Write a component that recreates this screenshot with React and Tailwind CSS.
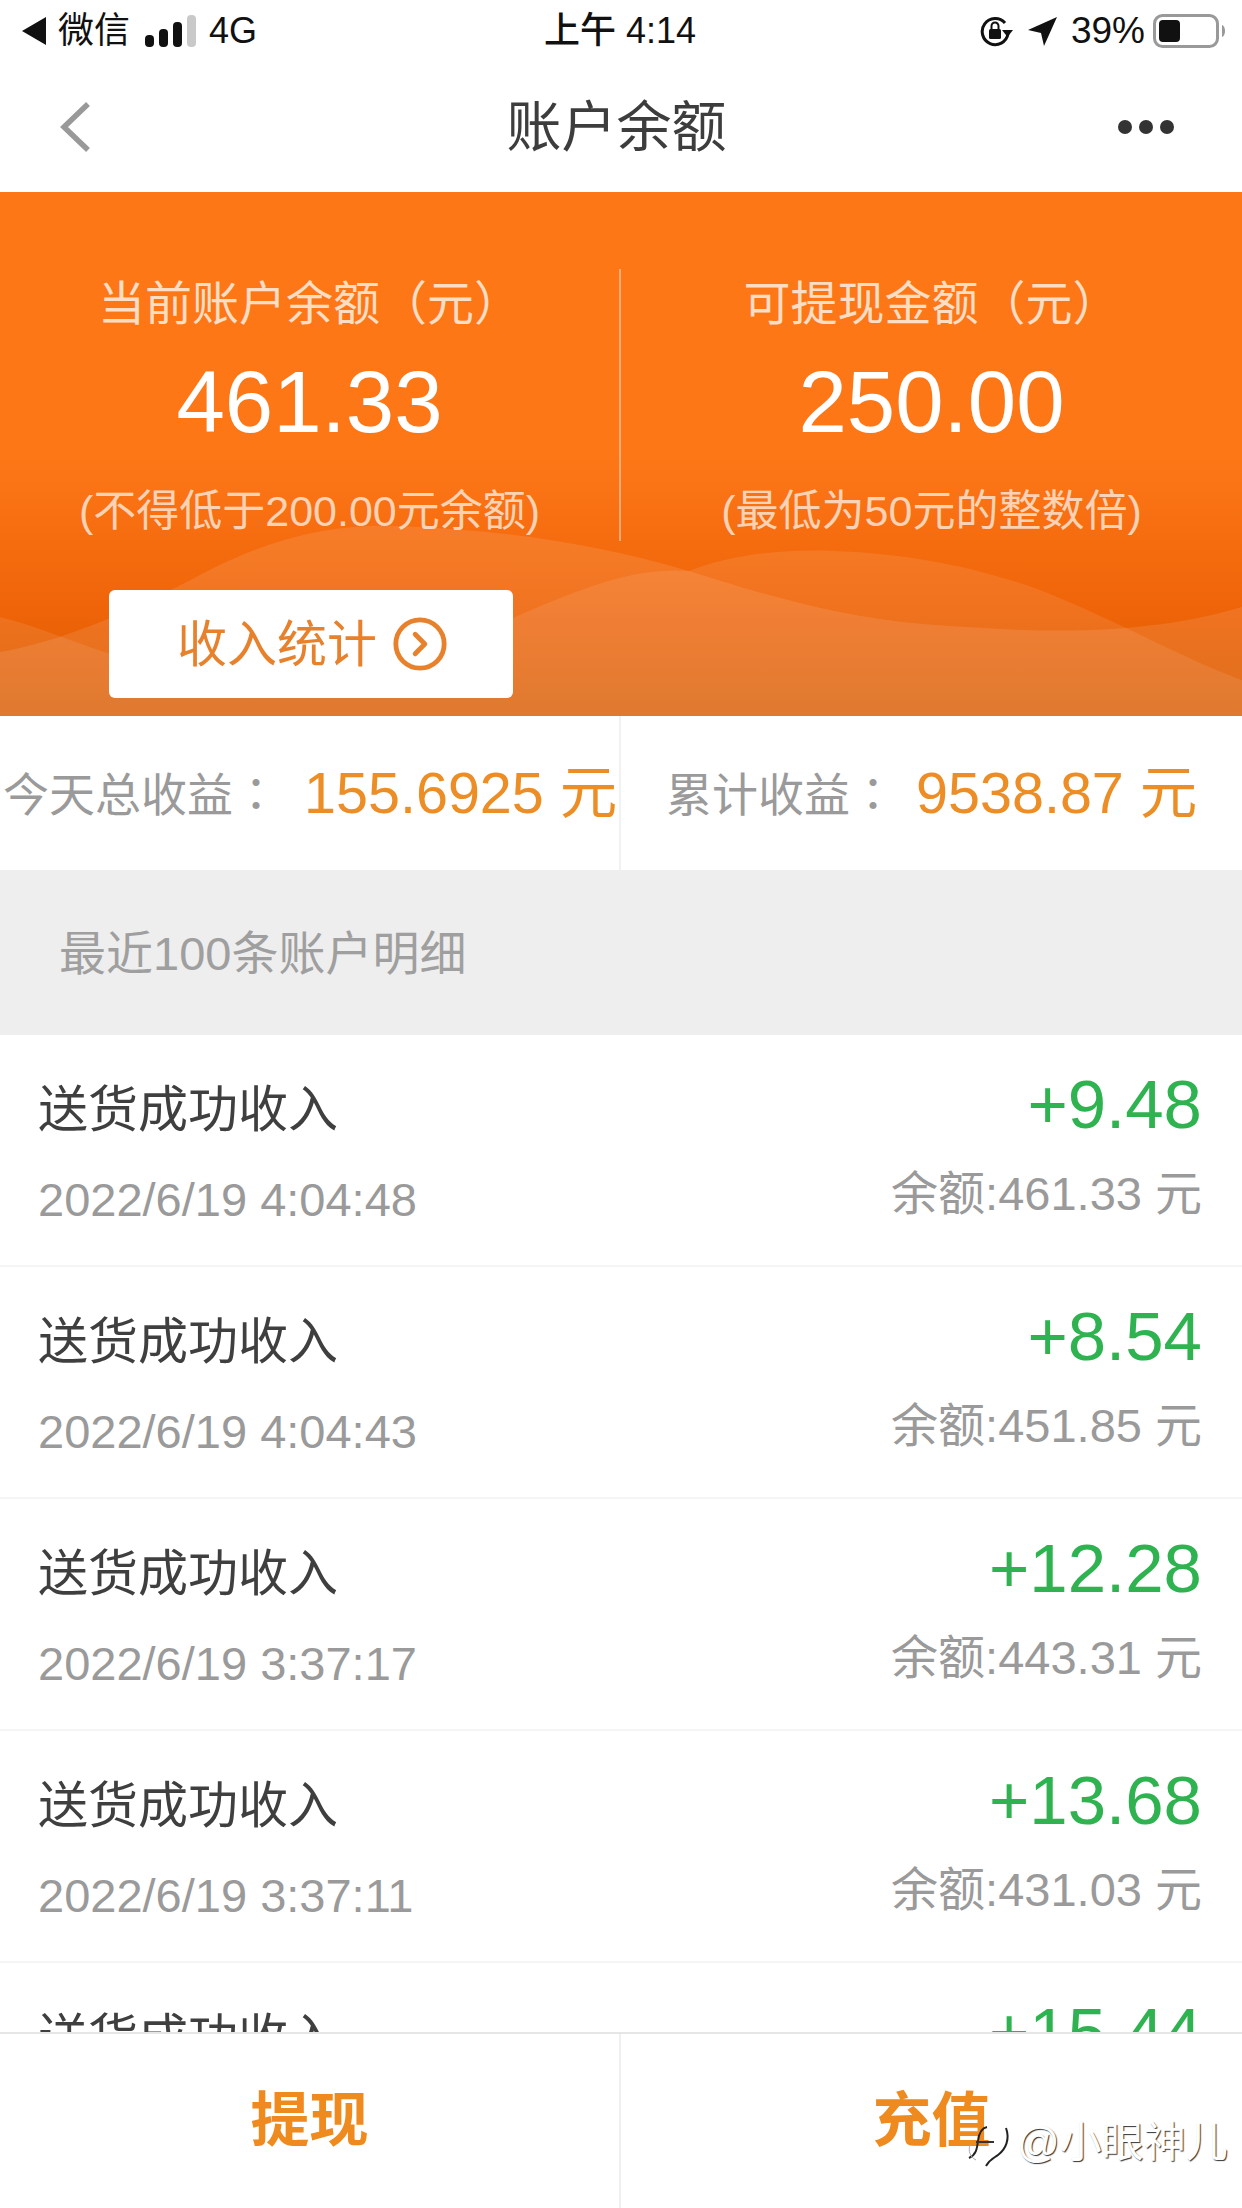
import { CircleChevronRight } from "lucide-react";

const rows = [
  { amount: "+9.48", time: "2022/6/19 4:04:48", balance: "461.33" },
  { amount: "+8.54", time: "2022/6/19 4:04:43", balance: "451.85" },
  { amount: "+12.28", time: "2022/6/19 3:37:17", balance: "443.31" },
  { amount: "+13.68", time: "2022/6/19 3:37:11", balance: "431.03" },
  { amount: "+15.44", time: "2022/6/19 3:30:02", balance: "417.35" },
];

function StatusBar() {
  return (
    <div className="flex h-[62px] items-center justify-between pl-[22px] pr-[16px] text-[36px] text-[#111]">
      <div className="flex w-[392px] items-center">
        <svg width="24" height="28" viewBox="0 0 24 28">
          <path d="M24 0v28L0 14z" fill="#111" />
        </svg>
        <span className="ml-[12px]">微信</span>
        <svg className="ml-[15px]" width="51" height="32" viewBox="0 0 51 32">
          <rect x="0" y="20" width="9" height="12" rx="4" fill="#111" />
          <rect x="14" y="14" width="9" height="18" rx="4" fill="#111" />
          <rect x="28" y="7" width="9" height="25" rx="4" fill="#111" />
          <rect x="42" y="0" width="9" height="32" rx="4" fill="#c9c9c9" />
        </svg>
        <span className="ml-[13px]">4G</span>
      </div>
      <div className="font-medium">上午 4:14</div>
      <div className="flex w-[400px] items-center justify-end">
        <svg width="33" height="32" viewBox="0 0 33 32" fill="none">
          <path d="M28 19a13 13 0 1 1-3-11" stroke="#111" strokeWidth="3" />
          <path d="M33 15H22l5.500 7z" fill="#111" />
          <rect x="9" y="14" width="12" height="10" rx="1.500" fill="#111" />
          <path d="M11.500 14v-3a3.500 3.500 0 0 1 7 0v3" stroke="#111" strokeWidth="2" />
        </svg>
        <svg className="ml-[15px]" width="29" height="29" viewBox="0 0 29 29">
          <path d="M29 0 0 13l13 3 3 13z" fill="#111" />
        </svg>
        <span className="ml-[14px] text-[37px]">39%</span>
        <svg className="ml-[8px]" width="73" height="34" viewBox="0 0 73 34" fill="none">
          <rect x="1.500" y="1.500" width="63" height="31" rx="8" stroke="#999" strokeWidth="3" />
          <rect x="6" y="6" width="21" height="22" rx="4" fill="#111" />
          <path d="M69 11c4 1 4 11 0 12z" fill="#999" />
        </svg>
      </div>
    </div>
  );
}

function NavBar() {
  return (
    <div className="flex h-[130px] items-center pl-[59px] pr-[62px]">
      <div className="flex-1">
        <svg width="32" height="52" viewBox="0 0 32 52" fill="none">
          <path d="M29 3 5 26l24 23" stroke="#999" strokeWidth="5.500" />
        </svg>
      </div>
      <div className="text-[55px] text-[#3d3d3d]">账户余额</div>
      <div className="flex flex-1 justify-end gap-[7px] pr-[6px]">
        <div className="h-[14px] w-[14px] rounded-full bg-[#333]" />
        <div className="h-[14px] w-[14px] rounded-full bg-[#333]" />
        <div className="h-[14px] w-[14px] rounded-full bg-[#333]" />
      </div>
    </div>
  );
}

function Hero() {
  return (
    <div className="relative h-[524px] overflow-hidden bg-gradient-to-b from-[#fd7717] from-50% via-[#ef6408] via-80% to-[#d95c02]">
      <svg className="absolute inset-0" width="1242" height="524" viewBox="0 0 1242 524">
        <path
          d="M0 460C60 450 130 420 198 384C270 346 330 332 396 334C500 338 590 350 689 379C780 408 860 430 950 434C1040 440 1140 445 1242 415V524H0Z"
          fill="#fff"
          fillOpacity="0.1"
        />
        <path
          d="M0 425C60 440 110 470 200 482C300 490 420 470 515 425C590 392 640 375 689 379C730 362 790 355 856 360C930 365 990 380 1040 398C1110 425 1190 470 1242 488V524H0Z"
          fill="#fff"
          fillOpacity="0.09"
        />
      </svg>
      <div className="relative mt-[77px] grid h-[271px] grid-cols-2 text-center">
        <div className="flex flex-col items-center border-r-2 border-white/40">
          <div className="text-[47px] leading-[70px] text-white/75">当前账户余额（元）</div>
          <div className="mt-[13px] text-[87px] leading-[100px] text-white">461.33</div>
          <div className="mt-[29px] text-[43px] leading-[60px] text-white/70">(不得低于200.00元余额)</div>
        </div>
        <div className="flex flex-col items-center">
          <div className="text-[47px] leading-[70px] text-white/75">可提现金额（元）</div>
          <div className="mt-[13px] text-[87px] leading-[100px] text-white">250.00</div>
          <div className="mt-[29px] text-[43px] leading-[60px] text-white/70">(最低为50元的整数倍)</div>
        </div>
      </div>
      <div className="relative ml-[109px] mt-[50px] flex h-[108px] w-[404px] items-center justify-center gap-[14px] rounded-[6px] bg-white pl-[4px] text-[50px] text-[#e8812c]">
        <span className="pt-[3px]">收入统计</span>
        <CircleChevronRight size={58} strokeWidth={2} />
      </div>
    </div>
  );
}

function Stats() {
  return (
    <div className="grid h-[154px] grid-cols-2 items-stretch">
      <div className="flex items-center border-r-2 border-[#f2f2f2] pl-[3px]">
        <span className="w-[301px] text-[46px] text-[#9a9a9a]">
          今天总收益<span className="font-['Noto_Sans_CJK_TC']">：</span>
        </span>
        <span className="pt-[1px] text-[57.500px] text-[#ed8d25]">155.6925 元</span>
      </div>
      <div className="flex items-center pl-[45px]">
        <span className="w-[250px] text-[46px] text-[#9a9a9a]">
          累计收益<span className="font-['Noto_Sans_CJK_TC']">：</span>
        </span>
        <span className="pt-[1px] text-[57.500px] text-[#ed8d25]">9538.87 元</span>
      </div>
    </div>
  );
}

function Row({ amount, time, balance }) {
  return (
    <div className="relative flex h-[232px] shrink-0 justify-between border-b-2 border-[#f5f5f5] pl-[38px] pr-[40px]">
      <div>
        <div className="mt-[45px] text-[50px] leading-[60px] text-[#3f3f3f]">送货成功收入</div>
        <div className="mt-[30px] text-[47px] leading-[60px] text-[#9a9a9a]">{time}</div>
      </div>
      <div className="text-right">
        <div className="mt-[30px] text-[69px] leading-[80px] text-[#2fb350]">{amount}</div>
        <div className="mt-[19px] text-[47px] leading-[60px] text-[#9a9a9a]">余额:{balance} 元</div>
      </div>
    </div>
  );
}

export default function App() {
  return (
    <div className="flex h-[2208px] w-[1242px] flex-col overflow-hidden bg-white font-['Liberation_Sans','Noto_Sans_CJK_SC',sans-serif]">
      <StatusBar />
      <NavBar />
      <Hero />
      <Stats />
      <div className="flex h-[165px] shrink-0 items-center bg-[#eeeeee] pl-[59px] pt-[3px] text-[47px] text-[#9f9f9f]">
        最近100条账户明细
      </div>
      <div className="flex min-h-0 flex-1 flex-col overflow-hidden">
        {rows.map((row) => (
          <Row key={row.time} {...row} />
        ))}
      </div>
      <div className="relative grid h-[176px] shrink-0 grid-cols-2 border-t-2 border-[#e6e6e6] bg-white text-[59px] font-bold text-[#ef8a1f]">
        <div className="flex items-center justify-center border-r-2 border-[#efefef]">提现</div>
        <div className="flex items-center justify-center">充值</div>
        <div className="absolute left-[968px] top-[79px] flex items-start text-[42px] font-normal leading-[50px] text-white [text-shadow:1px_1px_1px_#333]">
          <svg className="mt-[12px]" width="42" height="44" viewBox="0 0 42 44" fill="none" strokeWidth="2">
            <path d="M19 2C13 3 11 8 10 16C9 24 8 30 1 33" stroke="#222" />
            <path d="M38 3C42 14 38 24 30 30C26 33 22 34 18 41" stroke="#222" />
            <path d="M8 17H26" stroke="#333" />
            <path d="M2 20C0 26 2 32 8 35" stroke="#aaa" strokeWidth="1" />
          </svg>
          <span className="ml-[7px] mt-[5px]">@小眼神儿</span>
        </div>
      </div>
    </div>
  );
}
